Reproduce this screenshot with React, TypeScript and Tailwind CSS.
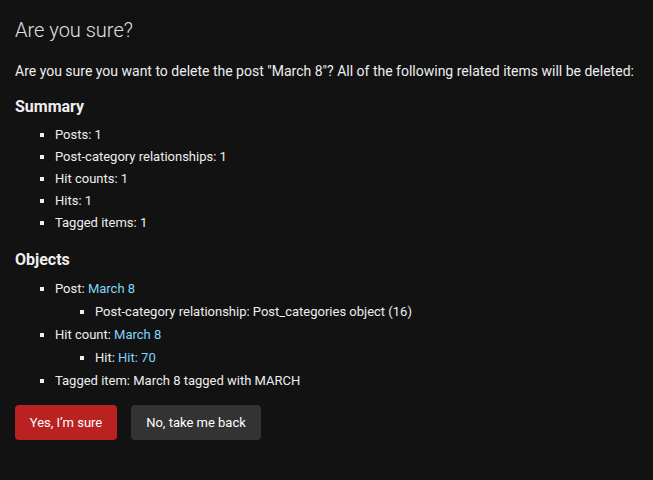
const summary = ['Posts: 1', 'Post-category relationships: 1', 'Hit counts: 1', 'Hits: 1', 'Tagged items: 1'];

function Link({ children }: { children: React.ReactNode }) {
  return <a href="#" className="text-[#81d4fa] no-underline">{children}</a>;
}

export default function App() {
  return (
    <div className="min-h-[480px] bg-[#121212] text-[#eeeeee] font-['Roboto',sans-serif] px-[15px] pt-[18px] pb-[40px]">
      <h1 className="text-[20px] leading-[24px] font-light text-[#e0e0e0]">Are you sure?</h1>

      <p className="mt-[19px] text-[14px] leading-[20px]">
        Are you sure you want to delete the post "March 8"? All of the following related items will be deleted:
      </p>

      <h2 className="mt-[16px] text-[16px] leading-[20px] font-bold">Summary</h2>
      <ul className="mt-[7px] pl-[40px] list-[square] text-[13px]">
        {summary.map((s) => (
          <li key={s} className="leading-[22px]">{s}</li>
        ))}
      </ul>

      <h2 className="mt-[16px] text-[16px] leading-[20px] font-bold">Objects</h2>
      <ul className="mt-[7px] pl-[40px] list-[square] text-[13px] leading-[23px]">
        <li>
          Post: <Link>March 8</Link>
          <ul className="pl-[40px] list-[square]">
            <li>Post-category relationship: Post_categories object (16)</li>
          </ul>
        </li>
        <li>
          Hit count: <Link>March 8</Link>
          <ul className="pl-[40px] list-[square]">
            <li>Hit: <Link>Hit: 70</Link></li>
          </ul>
        </li>
        <li>Tagged item: March 8 tagged with MARCH</li>
      </ul>

      <div className="mt-[13px] flex gap-[14px]">
        <button className="h-[35px] w-[102px] whitespace-nowrap rounded-[4px] bg-[#ba2121] text-white text-[13px]">
          Yes, I’m sure
        </button>
        <button className="h-[35px] w-[130px] whitespace-nowrap rounded-[4px] bg-[#333333] text-white text-[13px]">
          No, take me back
        </button>
      </div>
    </div>
  );
}
